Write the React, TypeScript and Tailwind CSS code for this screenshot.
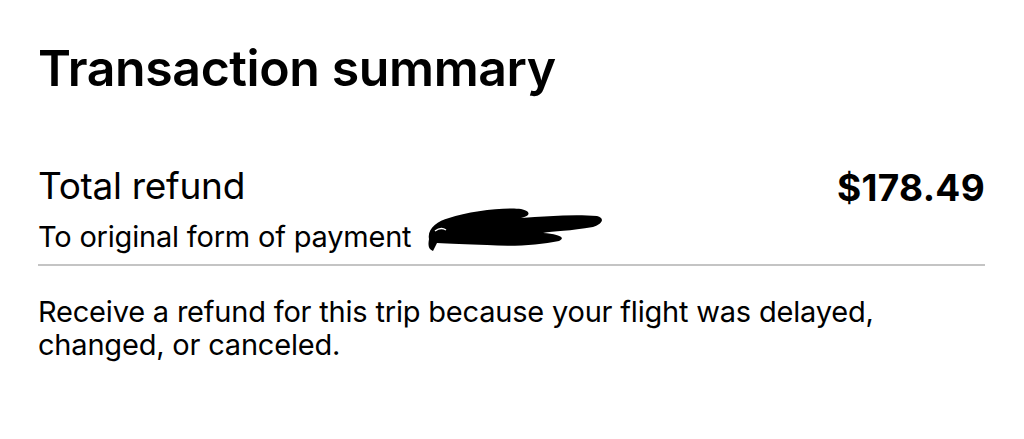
export default function App() {
  return (
    <div className="w-[1024px] h-[439px] bg-white text-black overflow-hidden" style={{ fontFamily: 'Inter, "Noto Sans", sans-serif' }}>
      <div className="pl-[38px] pr-[39px] pt-[38px]">
        <h1 className="text-[50px] leading-[60px] font-semibold tracking-[-0.4px]">Transaction summary</h1>
        <div className="mt-[66px] flex justify-between items-start">
          <div>
            <div className="text-[37px] leading-[44px] tracking-[-0.3px]">Total refund</div>
            <div className="mt-[11px] flex items-center">
              <span className="text-[29px] leading-[36px] tracking-[-0.2px]">To original form of payment</span>
              <svg width="185" height="50" viewBox="0 0 185 50" className="ml-[10px] -mt-[14px]">
                <path d="M8 34 C6 24 16 16 28 13 C48 6 85 2 100 4 C110 6 110 11 100 13 C125 11 155 9 176 11 C184 13 182 19 172 22 C150 26 132 26 122 28 C136 29 146 32 138 36 C118 40 92 42 66 40 C46 39 28 39 16 38 L12 46 C7 44 7 40 8 34 Z" fill="#000" />
                <path d="M14 26 C18 23 22 23 25 25" stroke="#fff" strokeWidth="1.5" fill="none" />
              </svg>
            </div>
          </div>
          <div className="mt-[2px] text-[37px] leading-[44px] font-bold tracking-[0.3px]">$178.49</div>
        </div>
        <div className="mt-[9px] h-[2px] bg-[#c4c4c4]" />
        <p className="mt-[29px] text-[29px] leading-[33px] tracking-[-0.2px]">
          Receive a refund for this trip because your flight was delayed,
          <br />
          changed, or canceled.
        </p>
      </div>
    </div>
  );
}
